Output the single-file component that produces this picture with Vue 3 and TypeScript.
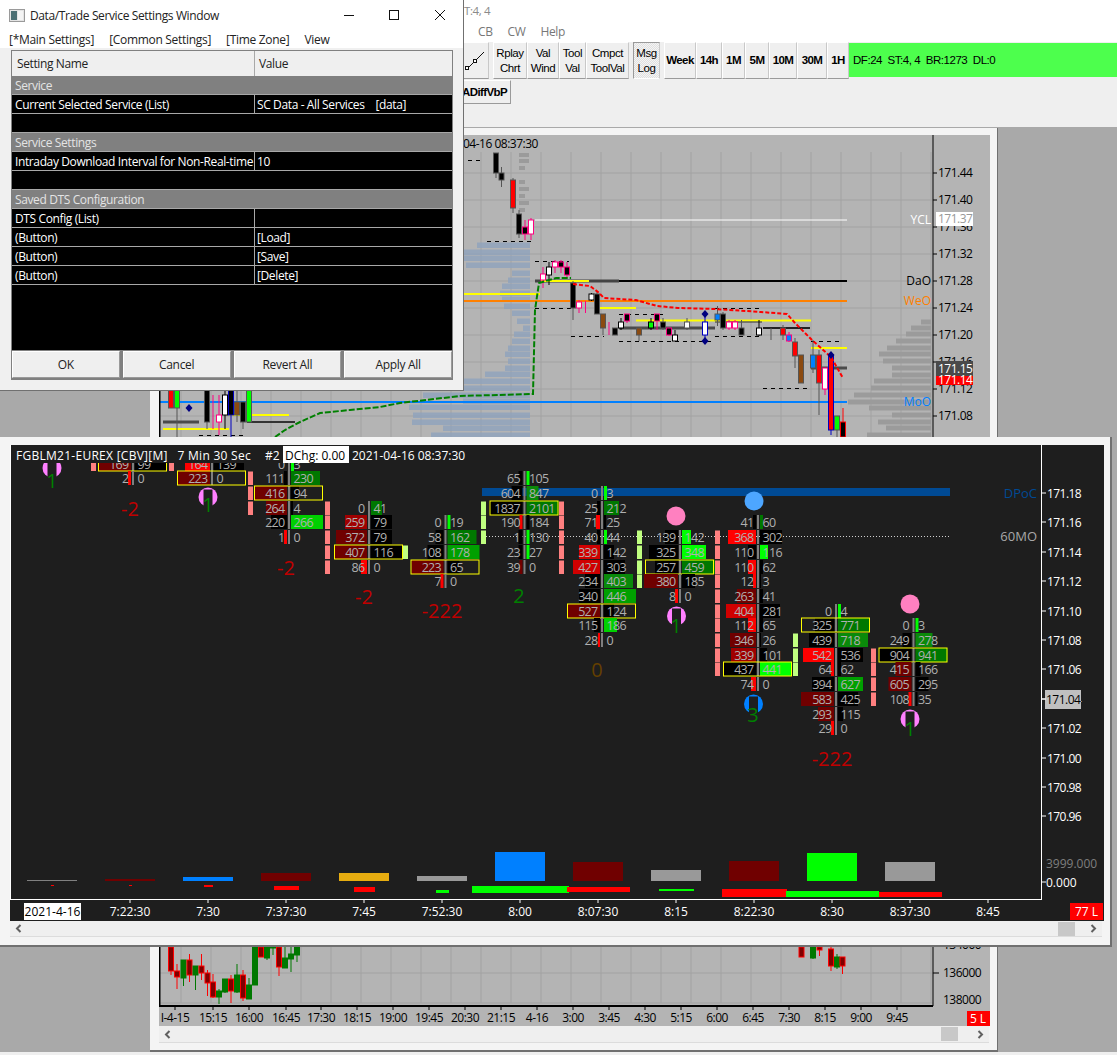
<template>
  <div class="desktop-app">
    <div class="app-title">T:4, 4</div>
    <div class="app-menu">
      <span>CB</span><span>CW</span><span>Help</span>
    </div>
    <div class="toolbar">
      <div class="tool-row">
        <button class="tbtn line-btn">
          <svg width="20" height="20" viewBox="0 0 20 20">
            <path d="M1.5 18.5 L19 1" stroke="#111" fill="none" />
            <rect x="0.5" y="15.5" width="3" height="3" fill="#fff" stroke="#111" />
            <rect x="8.5" y="8.5" width="3" height="3" fill="#fff" stroke="#111" />
          </svg>
        </button>
        <button
          v-for="b in toolButtons"
          :key="b.label"
          class="tbtn"
          :class="{ pressed: b.pressed, bold: b.bold }"
          :style="{ width: b.w + 'px', marginLeft: (b.gap || 0) + 'px' }"
        >
          <span v-for="l in b.label.split('|')" :key="l">{{ l }}</span>
        </button>
        <div class="status">DF:24&nbsp;&nbsp;ST:4, 4&nbsp;&nbsp;BR:1273&nbsp;&nbsp;DL:0</div>
      </div>
      <div class="tool-row second">
        <button class="tbtn bold study">ADiffVbP</button>
      </div>
    </div>

    <div class="workspace">
      <!-- chart behind -->
      <section class="win back-win">
        <svg class="chart" viewBox="159 135 831 891" width="831" height="891">
          <rect x="159" y="135" width="831" height="891" fill="#b4b4b4" />
          <line v-for="x in gridX" :key="'gx' + x" :x1="x" :x2="x" y1="152" y2="1003" class="grid" />
          <line v-for="y in gridY" :key="'gy' + y" x1="160" x2="933" :y1="y" :y2="y" class="grid" />
          <text x="463" y="148" class="bk">04-16 08:37:30</text>

          <rect v-for="(p, i) in leftProfile" :key="'lp' + i" :x="p[0]" :y="p[1] - 2.5" :width="530 - p[0]" height="5.5" fill="#8ea3bd" opacity="0.8" />
          <rect v-for="(p, i) in rightProfile" :key="'rp' + i" :x="p[0]" :y="p[1] - 2.5" :width="931 - p[0]" height="5" fill="#9b9b9b" />
          <rect v-for="y in [153, 159, 166, 180, 187, 194, 201, 208]" :key="'tp' + y" x="519" :y="y" :width="y % 2 ? 10 : 6" height="4" fill="#9b9b9b" />

          <line x1="535" x2="847" y1="220" y2="220" stroke="#fff" stroke-width="1" />
          <line x1="589" x2="847" y1="281" y2="281" stroke="#000" stroke-width="2" />
          <line x1="535" x2="619" y1="281" y2="281" stroke="#444" stroke-width="3" />
          <line x1="463" x2="847" y1="301" y2="301" stroke="#ff8000" stroke-width="2" />
          <line x1="160" x2="847" y1="402" y2="402" stroke="#0080ff" stroke-width="2" />
          <line v-for="(l, i) in solidLines" :key="'sl' + i" :x1="l[0]" :x2="l[1]" :y1="l[2]" :y2="l[2]" :stroke="l[3]" :stroke-width="l[4]" />
          <line v-for="(l, i) in dashLines" :key="'dl' + i" :x1="l[0]" :x2="l[1]" :y1="l[2]" :y2="l[2]" stroke="#000" stroke-dasharray="4 4" />

          <g v-for="(c, i) in candles" :key="'c' + i">
            <line :x1="c[0]" :x2="c[0]" :y1="c[3]" :y2="c[4]" :stroke="c[6]" />
            <rect :x="c[0] - 2.5" :y="c[1]" width="5" :height="c[2] - c[1]" :fill="c[5]" :stroke="c[6]" />
          </g>

          <path :d="greenLine" fill="none" stroke="#008000" stroke-width="2" stroke-dasharray="6 2" />
          <path :d="redLine" fill="none" stroke="#ff0000" stroke-width="2" stroke-dasharray="4 2" />
          <path v-for="d in diamonds" :key="d[0] + '-' + d[1]" :d="`M${d[0]} ${d[1] - 4}l3.5 4l-3.5 4l-3.5 -4z`" fill="#00007f" />

          <line x1="933" x2="933" y1="135" y2="1006" stroke="#000" />
          <line x1="159.5" x2="159.5" y1="135" y2="1006" stroke="#000" stroke-width="2" />
          <line x1="159" x2="933" y1="1006" y2="1006" stroke="#000" stroke-width="2" />
          <g v-for="p in backPrices" :key="p[0]">
            <line x1="933" x2="937" :y1="p[1]" :y2="p[1]" stroke="#000" />
            <text x="938" :y="p[1] + 4" class="bk">{{ p[0] }}</text>
          </g>
          <rect x="936" y="212" width="37" height="14" fill="#fff" />
          <text x="938" y="223" fill="#999" class="lbl tight">171.37</text>
          <rect x="936" y="361" width="37" height="15" fill="#4a4a4a" />
          <text x="938" y="373" fill="#fff" class="lbl tight">171.15</text>
          <rect x="936" y="376" width="37" height="9" fill="#ff0000" />
          <text x="938" y="384" fill="#fff" class="lbl tight">171.14</text>
          <text x="931" y="224" text-anchor="end" fill="#fff" class="lbl">YCL</text>
          <text x="931" y="285" text-anchor="end" fill="#000" class="lbl">DaO</text>
          <text x="931" y="305" text-anchor="end" fill="#ff8000" class="lbl">WeO</text>
          <text x="931" y="406" text-anchor="end" fill="#0080ff" class="lbl">MoO</text>

          <g v-for="c in lowerCandles" :key="'lc' + c[0]">
            <line :x1="c[0]" :x2="c[0]" :y1="c[3]" :y2="c[4]" :stroke="c[5] === 'r' ? '#ff0000' : '#007800'" />
            <rect :x="c[0] - 2.5" :y="c[1]" width="5" :height="c[2] - c[1]" :fill="c[5] === 'r' ? '#7f0000' : '#007800'" :stroke="c[5] === 'r' ? '#ff0000' : '#007800'" />
          </g>
          <g v-for="t in backTimes" :key="t[0]">
            <line :x1="t[1]" :x2="t[1]" y1="1006" y2="1010" stroke="#000" />
            <text :x="t[1]" y="1022" text-anchor="middle" class="bk">{{ t[0] }}</text>
          </g>
          <line x1="933" x2="939" y1="973" y2="973" stroke="#000" />
          <text x="943" y="977" class="bk">136000</text>
          <text x="943" y="949" class="bk">134000</text>
          <rect x="938" y="1005" width="40" height="6" fill="#b4b4b4" />
          <text x="943" y="1004" class="bk cut">138000</text>
          <rect x="967" y="1011" width="23" height="15" fill="#ff0000" />
          <text x="978" y="1023" text-anchor="middle" fill="#fff" class="lbl">5 L</text>
        </svg>
        <div class="hscroll">
          <svg class="chev" width="7" height="9" viewBox="0 0 7 9"><path d="M5.5 1 L2 4.5 L5.5 8" /></svg>
          <div class="thumb"></div>
          <svg class="chev" width="7" height="9" viewBox="0 0 7 9"><path d="M1.5 1 L5 4.5 L1.5 8" /></svg>
        </div>
      </section>

      <!-- footprint chart -->
      <section class="win front-win">
        <svg class="chart" viewBox="10 445 1094 476" width="1094" height="476">
          <rect x="10" y="445" width="1094" height="476" fill="#1e1e1e" />
          <rect x="482" y="488" width="468" height="8" fill="#004a94" />
          <line x1="483" x2="950" y1="536.5" y2="536.5" stroke="#d0d0d0" stroke-dasharray="1 2" />
          <text x="1037" y="498" text-anchor="end" fill="#004a94" class="mid">DPoC</text>
          <text x="1037" y="541" text-anchor="end" fill="#a8a8a8" class="mid">60MO</text>

          <g clip-path="url(#fpClip)">
            <rect v-for="(s, i) in sideBars" :key="'sb' + i" :x="s.x" :y="s.y - 6.5" width="5" height="13.5" :fill="s.c" />
            <g v-for="cell in cells" :key="cell.key">
              <rect v-if="cell.bw" :x="cell.x - 2 - cell.bw" :y="cell.y - 7" :width="cell.bw" height="14" :fill="shade[cell.bc]" />
              <rect v-if="cell.aw" :x="cell.x + 2" :y="cell.y - 7" :width="cell.aw" height="14" :fill="shade[cell.ac]" />
              <rect :x="cell.x - 1" :y="cell.y - 7" width="2" height="14" fill="#7f7f7f" />
              <rect v-if="cell.box" :x="cell.x - 34.5" :y="cell.y - 7" width="68" height="14" fill="none" stroke="#ffff00" />
              <text :x="cell.x - 4.5" :y="cell.y + 4.5" text-anchor="end" class="cell">{{ cell.bid }}</text>
              <text :x="cell.x + 4.5" :y="cell.y + 4.5" class="cell">{{ cell.ask }}</text>
            </g>
            <circle v-for="(d, i) in dots" :key="'dot' + i" :cx="d[0]" :cy="d[1]" r="9.5" :fill="d[2]" />
            <g v-for="(a, i) in arcs" :key="'arc' + i">
              <circle :cx="a[0]" :cy="a[1]" r="9.5" :fill="a[2]" />
              <rect :x="a[0] - 4.5" :y="a[1] - 7.5" width="9" height="18" fill="#1e1e1e" />
            </g>
            <text v-for="(b, i) in bigNums" :key="'bn' + i" :x="b[1]" :y="b[2]" text-anchor="middle" :fill="b[3]" class="big">{{ b[0] }}</text>
          </g>

          <rect v-for="(v, i) in volBars" :key="'v' + i" :x="v[0]" :y="v[1]" :width="v[2]" :height="v[3]" :fill="v[4]" />

          <rect x="10" y="445" width="1032" height="18" fill="#1e1e1e" />
          <text x="16" y="460" class="hdr wide">FGBLM21-EUREX [CBV][M]</text>
          <text x="177.5" y="460" class="hdr wide">7 Min 30 Sec</text>
          <text x="265" y="460" class="hdr">#2</text>
          <rect x="283" y="446" width="66" height="17" fill="#fff" />
          <text x="285" y="460" fill="#000" class="lbl">DChg: 0.00</text>
          <text x="352" y="460" class="hdr">2021-04-16 08:37:30</text>

          <line x1="10.5" x2="10.5" y1="445" y2="899" stroke="#fff" />
          <line x1="10" x2="1042" y1="899.5" y2="899.5" stroke="#fff" />
          <line x1="1041.5" x2="1041.5" y1="445" y2="900" stroke="#fff" />
          <g v-for="(p, i) in frontPrices" :key="p">
            <line x1="1042" x2="1046" :y1="priceY(i)" :y2="priceY(i)" stroke="#fff" />
            <text x="1047" :y="priceY(i) + 4.5" class="hdr price">{{ p }}</text>
          </g>
          <rect x="1045" y="690" width="36" height="19" fill="#c0c0c0" />
          <line x1="1042" x2="1046" y1="699" y2="699" stroke="#fff" />
          <text x="1046" y="704" fill="#000" class="lbl tight">171.04</text>
          <text x="1046" y="868" fill="#7f7f7f" class="lbl">3999.000</text>
          <line x1="1042" x2="1046" y1="882" y2="882" stroke="#fff" />
          <text x="1046" y="887" class="hdr">0.000</text>

          <g v-for="t in frontTimes" :key="t[0]">
            <line :x1="t[1]" :x2="t[1]" y1="900" y2="903" stroke="#fff" />
            <text :x="t[1]" y="916" text-anchor="middle" class="hdr">{{ t[0] }}</text>
          </g>
          <rect x="24" y="903" width="57" height="17" fill="#fff" />
          <text x="52.5" y="916" text-anchor="middle" fill="#000" class="lbl">2021-4-16</text>
          <rect x="1070" y="903" width="33" height="17" fill="#ff0000" />
          <text x="1086.5" y="916" text-anchor="middle" fill="#fff" class="lbl">77 L</text>

          <clipPath id="fpClip"><rect x="11" y="463" width="1030" height="436" /></clipPath>
        </svg>
        <div class="hscroll">
          <svg class="chev" width="7" height="9" viewBox="0 0 7 9"><path d="M5.5 1 L2 4.5 L5.5 8" /></svg>
          <div class="thumb"></div>
          <svg class="chev" width="7" height="9" viewBox="0 0 7 9"><path d="M1.5 1 L5 4.5 L1.5 8" /></svg>
        </div>
      </section>
    </div>
    <div class="app-foot"></div>

    <!-- settings dialog -->
    <section class="dialog">
      <header class="dlg-title">
        <svg width="16" height="13" viewBox="0 0 16 13">
          <rect x="0.5" y="0.5" width="15" height="12" fill="#e4e4e4" stroke="#9a9a9a" />
          <rect x="2" y="2" width="6" height="9" fill="#4b6f73" />
          <rect x="9" y="2" width="5" height="9" fill="#f4f4f4" />
        </svg>
        <span class="dlg-name">Data/Trade Service Settings Window</span>
        <svg class="winctl" width="102" height="12" viewBox="0 0 102 12">
          <path d="M0 6.5 H10" stroke="#111" fill="none" />
          <rect x="45.5" y="1.5" width="9" height="9" stroke="#111" fill="none" />
          <path d="M91 1 L101 11 M101 1 L91 11" stroke="#111" fill="none" />
        </svg>
      </header>
      <nav class="dlg-menu">
        <span>[*Main Settings]</span>
        <span>[Common Settings]</span>
        <span>[Time Zone]</span>
        <span>View</span>
      </nav>
      <div class="dlg-body">
        <div class="sheet">
          <div class="sheet-head">
            <div class="c-name">Setting Name</div>
            <div class="c-value">Value</div>
          </div>
          <div class="sheet-rows">
            <div v-for="(r, i) in settingRows" :key="i" class="srow" :class="r.kind">
              <template v-if="r.kind === 'group'">{{ r.name }}</template>
              <template v-else-if="r.kind === 'item'">
                <div class="c-name clip">{{ r.name }}</div>
                <div class="c-value">{{ r.value }}</div>
              </template>
            </div>
          </div>
          <div class="dlg-buttons">
            <button v-for="b in ['OK', 'Cancel', 'Revert All', 'Apply All']" :key="b">{{ b }}</button>
          </div>
        </div>
      </div>
    </section>
  </div>
</template>

<script setup lang="ts">
import { computed } from 'vue'

interface ToolBtn { label: string; w: number; gap?: number; pressed?: boolean; bold?: boolean }
interface SettingRow { kind: 'group' | 'item' | 'blank'; name?: string; value?: string }
// bid, ask, bid bar width, bid shade, ask bar width, ask shade, yellow box
type FpRow = [number, number, number, string, number, string, boolean?]
interface FpCol { x: number; start: number; rows: FpRow[] }
// x, body top, body bottom, wick top, wick bottom, fill, stroke
type Candle = [number, number, number, number, number, string, string]

const toolButtons: ToolBtn[] = [
  { label: 'Rplay|Chrt', w: 34, gap: 4 },
  { label: 'Val|Wind', w: 32 },
  { label: 'Tool|Val', w: 27 },
  { label: 'Cmpct|ToolVal', w: 43 },
  { label: 'Msg|Log', w: 27, gap: 4, pressed: true },
  { label: 'Week', w: 32, gap: 4, bold: true },
  { label: '14h', w: 26, bold: true },
  { label: '1M', w: 23, bold: true },
  { label: '5M', w: 24, bold: true },
  { label: '10M', w: 28, bold: true },
  { label: '30M', w: 30, bold: true },
  { label: '1H', w: 22, bold: true },
]

const settingRows: SettingRow[] = [
  { kind: 'group', name: 'Service' },
  { kind: 'item', name: 'Current Selected Service (List)', value: 'SC Data - All Services    [data]' },
  { kind: 'blank' },
  { kind: 'group', name: 'Service Settings' },
  { kind: 'item', name: 'Intraday Download Interval for Non-Real-time', value: '10' },
  { kind: 'blank' },
  { kind: 'group', name: 'Saved DTS Configuration' },
  { kind: 'item', name: 'DTS Config (List)', value: '' },
  { kind: 'item', name: '(Button)', value: '[Load]' },
  { kind: 'item', name: '(Button)', value: '[Save]' },
  { kind: 'item', name: '(Button)', value: '[Delete]' },
]

const gridX = Array.from({ length: 26 }, (_, i) => 181 + i * 30)
const gridY = [173, 200, 227, 254, 281, 308, 335, 362, 389, 416, 443, 973, 1003]

const backPrices: [string, number][] = [
  ['171.44', 173], ['171.40', 200], ['171.36', 227], ['171.32', 254], ['171.28', 281],
  ['171.24', 308], ['171.20', 335], ['171.16', 362], ['171.12', 389], ['171.08', 416],
]

const backTimes: [string, number][] = [
  ['I-4-15', 175], ['15:15', 213], ['16:00', 249], ['16:45', 286], ['17:30', 321], ['18:15', 357],
  ['19:00', 393], ['19:45', 429], ['20:30', 465], ['21:15', 501], ['4-16', 537], ['3:00', 573],
  ['3:45', 609], ['4:30', 645], ['5:15', 681], ['6:00', 717], ['6:45', 753], ['7:30', 789],
  ['8:15', 825], ['9:00', 861], ['9:45', 897],
]

const leftProfile: [number, number][] = [
  [477, 245], [464, 252], [464, 258], [466, 265], [512, 273], [508, 280], [502, 286], [500, 293],
  [502, 299], [504, 306], [512, 313], [517, 321], [523, 328], [514, 334], [512, 341], [508, 348],
  [505, 354], [508, 361], [505, 368], [485, 374], [463, 381], [463, 388], [423, 395], [463, 401],
  [409, 407], [413, 415], [412, 422], [443, 428], [431, 435],
]

const rightProfile: [number, number][] = [
  [921, 322], [911, 328], [906, 334], [896, 341], [887, 348], [879, 354], [883, 361], [892, 368],
  [892, 375], [874, 381], [871, 388], [854, 395], [848, 402], [869, 408], [892, 415], [878, 422],
  [886, 428], [867, 435],
]

const solidLines: [number, number, number, string, number][] = [
  [463, 540, 294, '#ffff00', 2], [541, 589, 281, '#ffff00', 2], [595, 636, 308, '#ffff00', 2],
  [636, 811, 320.5, '#ffff00', 2], [811, 847, 348, '#ffff00', 2], [619, 715, 328, '#4a4a4a', 3],
  [715, 762, 322, '#333', 1], [763, 810, 328, '#222', 2], [811, 847, 368, '#4a4a4a', 3],
  [163, 199, 422, '#4a4a4a', 3], [163, 229, 429, '#ffff00', 2], [229, 289, 415, '#ffff00', 2],
  [247, 295, 422, '#333', 2],
]

const dashLines: [number, number, number][] = [
  [487, 531, 241.5], [535, 569, 261.5], [535, 573, 308.5], [571, 604, 336.5], [619, 664, 314.5],
  [619, 711, 341.5], [715, 761, 336.5], [715, 761, 308.5], [763, 808, 388.5], [811, 843, 341.5],
  [199, 244, 435.5], [460, 480, 160.5],
]

const BL = '#000'
const GR = '#555'
const PK = '#ff0080'
const candles: Candle[] = [
  [496, 153, 173, 153, 178, BL, GR], [501.5, 173, 180, 167, 187, BL, GR], [513, 180, 208, 178, 213, '#ff0000', GR],
  [519, 214, 234, 210, 238, BL, GR], [525, 227, 234, 220, 240, BL, PK], [531, 220, 234, 218, 240, '#fff', PK],
  [543, 274, 280, 267, 288, '#fff', PK], [549, 267, 275, 262, 285, '#fff', BL], [555, 262, 267, 260, 273, '#fff', PK],
  [561, 262, 267, 260, 273, BL, PK], [567, 267, 275, 262, 278, BL, PK], [573, 283, 308, 281, 320, BL, GR],
  [579, 302, 308, 300, 313, '#fff', PK], [585.5, 301, 301, 301, 313, PK, PK], [591.5, 294, 300, 293, 301, '#fff', BL],
  [597, 294, 314, 292, 314, BL, GR], [603, 314, 328, 314, 335, '#8b4a10', GR], [609, 322, 322, 322, 335, PK, PK],
  [615, 328, 335, 328, 335, BL, GR], [621, 322, 328, 318, 330, '#fff', BL], [627, 314, 321, 314, 323, BL, PK],
  [639, 328, 335, 328, 341, '#8b4a10', GR], [651, 322, 328, 318, 330, '#00ff00', BL], [657, 314, 321, 314, 330, BL, PK],
  [663, 322, 328, 318, 330, BL, GR], [669, 328, 335, 328, 336, BL, PK], [675, 335, 341, 330, 341, '#fff', BL],
  [687, 322, 328, 318, 330, '#fff', GR], [705, 322, 335, 316, 340, '#fff', '#0000c0'], [717.5, 314, 320, 306, 326, '#0080ff', GR],
  [723, 314, 328, 312, 330, BL, GR], [729, 322, 328, 320, 330, '#fff', PK], [735, 322, 328, 320, 330, '#fff', PK],
  [741.5, 328, 335, 320, 335, BL, GR], [759, 328, 335, 320, 336, '#fff', BL], [771, 328, 328, 328, 340, GR, GR],
  [783, 328, 335, 325, 340, '#ff0000', GR], [789, 335, 341, 332, 342, '#0080ff', PK], [795, 342, 356, 338, 368, '#ff0000', GR],
  [801, 355, 383, 355, 383, '#8b4a10', GR], [813, 355, 368, 340, 373, '#0080ff', GR], [819, 355, 383, 350, 415, '#ff0000', GR],
  [825, 368, 389, 368, 395, '#fff', PK], [831, 355, 430, 352, 435, '#ff0000', '#0000c0'], [837, 416, 430, 416, 437, '#00ff00', GR],
  [843, 422, 437, 408, 437, BL, '#ff0000'],
  [171, 390, 408, 385, 408, '#ff0000', GR], [177, 390, 408, 385, 437, '#00ff00', GR], [207, 390, 422, 385, 429, BL, GR],
  [213, 422, 422, 395, 429, PK, PK], [219, 415, 422, 395, 435, '#fff', PK], [225, 395, 415, 385, 429, '#fff', BL],
  [231, 385, 415, 385, 437, BL, '#0000c0'], [237, 402, 415, 390, 422, '#8b4a10', GR], [243, 402, 422, 402, 429, BL, GR],
  [249, 390, 422, 385, 422, '#00ff00', GR],
]

const diamonds: [number, number][] = [[705, 314], [705, 341], [831, 355], [189, 408]]

const greenLine = 'M275 437 L285 430 L300 422 L320 413 L350 410 L380 407 L400 403 L460 396 L533 394 L535 310 L539 283 L556 278 L571 278'
const redLine = 'M573 284 L590 286 L598 292 L604 298 L636 300 L657 306 L678 308 L715 309 L761 312 L787 314 L795 323 L812 340 L831 357 L843 378'

const lowerCandles: [number, number, number, number, number, string][] = [
  [171, 947, 971, 947, 975, 'r'], [177, 971, 977, 964, 989, 'r'], [183.5, 960, 978, 960, 986, 'g'],
  [189.5, 960, 975, 954, 982, 'r'], [195.5, 966, 975, 966, 990, 'g'], [201.5, 966, 973, 954, 980, 'r'],
  [207.5, 973, 983, 970, 996, 'r'], [213, 982, 997, 974, 998, 'r'], [219, 991, 997, 989, 1004, 'g'],
  [225, 979, 992, 979, 993, 'g'], [231, 979, 991, 975, 1003, 'r'], [237, 975, 992, 964, 993, 'g'],
  [243, 975, 998, 970, 1001, 'r'], [249, 985, 999, 978, 999, 'g'], [255, 947, 985, 947, 985, 'g'],
  [261, 947, 957, 947, 957, 'r'], [267, 947, 958, 947, 960, 'g'], [273, 947, 948, 947, 955, 'g'],
  [279, 947, 967, 947, 976, 'r'], [285, 958, 968, 947, 968, 'g'], [291, 954, 959, 947, 972, 'g'],
  [297, 947, 955, 947, 962, 'g'], [801.5, 947, 957, 947, 957, 'r'], [813, 947, 958, 947, 959, 'g'],
  [819.5, 947, 950, 947, 956, 'r'], [831, 949, 966, 947, 971, 'r'], [837, 957, 967, 954, 969, 'g'],
  [842.5, 957, 966, 957, 974, 'r'],
]

const frontPrices = ['171.18', '171.16', '171.14', '171.12', '171.10', '171.08', '171.06', '171.04', '171.02', '171.00', '170.98', '170.96']
const priceY = (i: number) => Math.round(493 + i * 29.4)

const frontTimes: [string, number][] = [
  ['7:22:30', 130], ['7:30', 208], ['7:37:30', 286], ['7:45', 364], ['7:52:30', 442], ['8:00', 520],
  ['8:07:30', 598], ['8:15', 676], ['8:22:30', 754], ['8:30', 832], ['8:37:30', 910], ['8:45', 988],
]

const shade: Record<string, string> = {
  k: '#000000', r: '#ff0000', d: '#d00000', m: '#a00000', v: '#700000',
  g: '#00ff00', h: '#00d000', a: '#00a000', t: '#0a8a0a', n: '#007800',
}

const fp: FpCol[] = [
  { x: 133, start: -2, rows: [[169, 99, 32, 'v', 32, 'k', true], [2, 0, 3, 'r', 0, 'k']] },
  { x: 212, start: -2, rows: [[164, 139, 25, 'r', 30, 'k'], [223, 0, 32, 'v', 0, 'k', true]] },
  { x: 289, start: -2, rows: [[0, 3, 0, 'k', 3, 'g'], [111, 230, 3, 'k', 29, 'n'], [416, 94, 33, 'v', 8, 'k', true], [264, 4, 21, 'v', 2, 'k'], [220, 266, 16, 'k', 32, 'h'], [1, 0, 3, 'r', 0, 'k']] },
  { x: 369, start: 1, rows: [[0, 41, 0, 'k', 11, 'n'], [259, 79, 22, 'm', 21, 'k'], [372, 79, 31, 'v', 21, 'k'], [407, 116, 32, 'v', 32, 'k', true], [86, 0, 6, 'r', 0, 'k']] },
  { x: 445.5, start: 2, rows: [[0, 19, 0, 'k', 3, 'g'], [58, 162, 8, 'k', 29, 'n'], [108, 178, 16, 'k', 32, 'a'], [223, 65, 32, 'v', 12, 'k', true], [7, 0, 3, 'r', 0, 'k']] },
  { x: 524.5, start: -1, rows: [[65, 105, 4, 'k', 3, 'g'], [604, 847, 11, 'k', 12, 't'], [1837, 2101, 33, 'k', 32, 'n', true], [190, 184, 3, 'r', 3, 'k'], [1, 130, 4, 'k', 3, 'g'], [23, 27, 4, 'k', 3, 'g'], [39, 0, 3, 'v', 0, 'k']] },
  { x: 602, start: 0, rows: [[0, 3, 0, 'k', 3, 'g'], [25, 212, 3, 'k', 15, 'n'], [71, 25, 4, 'r', 2, 'k'], [40, 44, 3, 'k', 3, 'g'], [339, 142, 21, 'd', 10, 'k'], [427, 303, 27, 'd', 21, 'k'], [234, 403, 15, 'k', 29, 't'], [340, 446, 21, 'k', 32, 'a'], [527, 124, 32, 'v', 10, 'k', true], [115, 186, 6, 'k', 13, 'h'], [28, 0, 2, 'r', 0, 'k']] },
  { x: 680, start: 3, rows: [[139, 142, 13, 'k', 9, 'g'], [325, 348, 29, 'k', 24, 'g'], [257, 459, 23, 'k', 33, 'n', true], [380, 185, 34, 'v', 13, 'k'], [8, 0, 3, 'r', 0, 'k']] },
  { x: 758, start: 2, rows: [[41, 60, 3, 'k', 3, 'n'], [368, 302, 28, 'r', 22, 'k'], [110, 116, 8, 'k', 8, 'g'], [110, 62, 8, 'r', 3, 'k'], [12, 3, 3, 'r', 1, 'k'], [263, 41, 19, 'v', 3, 'k'], [404, 281, 30, 'd', 20, 'k'], [112, 65, 8, 'r', 3, 'k'], [346, 26, 26, 'v', 1, 'k'], [339, 101, 25, 'm', 7, 'k'], [437, 441, 32, 'k', 32, 'g', true], [74, 0, 5, 'r', 0, 'k']] },
  { x: 836, start: 8, rows: [[0, 4, 0, 'k', 3, 'g'], [325, 771, 19, 'k', 32, 'n', true], [439, 718, 25, 'k', 30, 't'], [542, 536, 31, 'r', 25, 'k'], [64, 62, 3, 'r', 3, 'k'], [394, 627, 22, 'k', 25, 'a'], [583, 425, 33, 'v', 20, 'k'], [293, 115, 16, 'v', 5, 'k'], [29, 0, 3, 'r', 0, 'k']] },
  { x: 913.5, start: 9, rows: [[0, 3, 0, 'k', 3, 'g'], [249, 278, 9, 'k', 17, 't'], [904, 941, 32, 'k', 32, 'n', true], [415, 166, 16, 'v', 5, 'k'], [605, 295, 23, 'v', 13, 'k'], [108, 35, 3, 'r', 2, 'k']] },
]

const rowY = (i: number) => Math.round(493 + i * 14.7)

const cells = computed(() =>
  fp.flatMap((col) =>
    col.rows.map((r, i) => ({
      key: col.x + '-' + i,
      x: col.x,
      y: rowY(col.start + i),
      bid: r[0],
      ask: r[1],
      bw: r[2],
      bc: r[3],
      aw: r[4],
      ac: r[5],
      box: r[6],
    })),
  ),
)

const side = (x: number, c: string, rows: number[]) => rows.map((r) => ({ x, c, y: rowY(r) }))
const PINK = '#ff8080'
const LIME = '#c0ff80'
const sideBars = [
  ...side(91, PINK, [-2]), ...side(169, PINK, [-2]),
  ...side(248, PINK, [-1, 0, 1]),
  ...side(325, PINK, [1, 2, 3, 4, 5]),
  ...side(403, LIME, [4]),
  ...side(481, LIME, [1, 2, 3]),
  ...side(559, PINK, [1, 2, 3, 4, 5]),
  ...side(637, LIME, [3, 4, 5, 6]),
  ...side(715, PINK, [3, 4, 5, 6, 7, 8, 9, 10, 11, 12]),
  ...side(793, LIME, [10, 11, 12]),
  ...side(871, PINK, [11, 12, 13, 14]),
]

const dots: [number, number, string][] = [[676, 516, '#ff80c0'], [754, 501, '#4da6ff'], [910, 604, '#ff80c0']]
const arcs: [number, number, string][] = [[52, 468, '#ff80ff'], [208, 497, '#ff80ff'], [676.5, 616, '#ff80ff'], [753.5, 704, '#0080ff'], [910, 719, '#ff80ff']]

const bigNums: [string, number, number, string][] = [
  ['1', 52, 488, '#008000'], ['-2', 130, 516, '#c00000'], ['1', 208, 512, '#008000'], ['-2', 286, 575, '#c00000'],
  ['-2', 364, 604, '#c00000'], ['-222', 442, 618, '#c00000'], ['2', 519, 603, '#008000'], ['0', 597, 677, '#644000'],
  ['1', 676, 633, '#008000'], ['3', 753, 722, '#008000'], ['-222', 832, 766, '#c00000'], ['1', 910, 736, '#008000'],
]

const volBars: [number, number, number, number, string][] = [
  [27, 880, 50, 1, '#808080'], [105, 879, 50, 2, '#700000'], [183, 877, 50, 4, '#0080ff'], [261, 873, 50, 8, '#700000'],
  [339, 873, 50, 8, '#e6ac10'], [417, 876, 50, 5, '#999'], [495, 852, 50, 29, '#0080ff'], [573, 862, 50, 19, '#700000'],
  [651, 870, 50, 11, '#999'], [729, 861, 50, 20, '#700000'], [807, 853, 50, 28, '#00ff00'], [885, 862, 50, 19, '#999'],
  [51, 885, 3, 1, '#ff0000'], [129, 885, 3, 1, '#ff0000'], [204, 885, 9, 2, '#ff0000'], [274, 886, 25, 4, '#ff0000'],
  [354, 887, 21, 5, '#ff0000'], [436, 890, 13, 3, '#00ff00'], [472, 886, 97, 7, '#00ff00'], [567, 887, 63, 5, '#ff0000'],
  [659, 889, 35, 2, '#00ff00'], [722, 889, 65, 8, '#ff0000'], [786, 891, 93, 6, '#00ff00'], [879, 892, 63, 5, '#ff0000'],
]
</script>

<style scoped>
.desktop-app {
  position: relative;
  width: 1117px;
  height: 1055px;
  overflow: hidden;
  display: flex;
  flex-direction: column;
  font-family: "Open Sans", "Noto Sans", sans-serif;
  font-size: 12px;
  letter-spacing: -0.38px;
  background: #efefef;
}

.app-title {
  height: 24px;
  box-sizing: border-box;
  padding: 4px 0 0 464px;
  background: #fff;
  color: #8a8a8a;
  font-size: 11.5px;
  line-height: 14px;
}

.app-menu {
  height: 18px;
  display: flex;
  gap: 15px;
  padding-left: 478px;
  background: #fff;
  color: #777;
  line-height: 16px;
}

.toolbar {
  height: 85px;
  display: flex;
  flex-direction: column;
  background: #efefef;
}

.tool-row {
  height: 37px;
  display: flex;
  padding-left: 460px;
}

.tool-row.second {
  height: 24px;
  margin-top: 1px;
}

.tbtn {
  display: flex;
  flex-direction: column;
  align-items: center;
  justify-content: center;
  box-sizing: border-box;
  padding: 0;
  background: #efefef;
  border: none;
  border-top: 1px solid #fff;
  border-right: 1px solid #c8c8c8;
  border-bottom: 1px solid #9a9a9a;
  border-left: 1px solid #fff;
  font-family: "Liberation Sans", sans-serif;
  font-size: 11.5px;
  letter-spacing: -0.4px;
  line-height: 15px;
  color: #000;
}

.tbtn.bold {
  font-weight: 700;
  letter-spacing: -0.6px;
}

.tbtn.pressed {
  background: repeating-conic-gradient(#f4f4f4 0 25%, #e0e0e0 0 50%) 0 0 / 2px 2px;
  border-top-color: #9a9a9a;
  border-left-color: #9a9a9a;
  border-bottom-color: #fff;
}

.line-btn {
  width: 29px;
}

.study {
  width: 51px;
  align-items: flex-end;
  padding-right: 3px;
  border-right-color: #9a9a9a;
}

.status {
  flex: 1;
  height: 34px;
  margin-top: 1px;
  padding-left: 4px;
  background: #4dff4d;
  font-family: "Liberation Sans", sans-serif;
  font-size: 11.5px;
  letter-spacing: -0.45px;
  line-height: 35px;
  color: #000;
}

.workspace {
  position: relative;
  flex: 1;
  background: #a9a9a9;
}

.app-foot {
  height: 3px;
  background: #efefef;
}

.win {
  position: absolute;
  display: flex;
  flex-direction: column;
  box-sizing: border-box;
  background: #f4f4f4;
}

.back-win {
  left: 150px;
  top: 1px;
  width: 848px;
  height: 924px;
  padding: 7px 8px 7px 9px;
  border-right: 1px solid #707070;
  border-bottom: 2px solid #707070;
}

.front-win {
  left: 0;
  top: 310px;
  width: 1112px;
  height: 510px;
  padding: 8px 8px 8px 10px;
  border-right: 2px solid #707070;
  border-bottom: 2px solid #707070;
}

.chart {
  display: block;
  flex: none;
}

.hscroll {
  height: 17px;
  display: flex;
  align-items: center;
  padding: 0 5px;
  background: #efefef;
  border-bottom: 1px solid #dcdcdc;
  box-sizing: border-box;
}

.thumb {
  width: 17px;
  height: 14px;
  margin-left: auto;
  margin-right: 15px;
  background: #c8c8c8;
}

.back-win .thumb {
  margin-right: 19px;
}

.chev path {
  fill: none;
  stroke: #606060;
  stroke-width: 2;
}

.grid {
  stroke: #a2a2a2;
  stroke-width: 1;
}

.bk {
  font-size: 12px;
  letter-spacing: -0.5px;
  fill: #000;
}

.lbl {
  font-size: 12px;
  letter-spacing: 0;
}

.lbl.tight {
  letter-spacing: -0.5px;
}

.mid {
  font-size: 13px;
  letter-spacing: 0;
}

.hdr {
  font-size: 12px;
  letter-spacing: 0;
  fill: #fff;
}

.hdr.wide {
  letter-spacing: 0.27px;
}

.hdr.price {
  font-weight: 500;
  letter-spacing: -0.55px;
}

.cell {
  font-size: 12.5px;
  letter-spacing: -0.7px;
  fill: #b0b0b0;
}

.big {
  font-size: 20px;
  letter-spacing: 0;
}

.dialog {
  position: absolute;
  left: 0;
  top: 0;
  width: 464px;
  height: 391px;
  box-sizing: border-box;
  display: flex;
  flex-direction: column;
  background: #fff;
  border-right: 1px solid #707070;
  border-bottom: 1px solid #707070;
}

.dlg-title {
  height: 30px;
  display: flex;
  align-items: center;
  padding-left: 9px;
}

.dlg-name {
  margin-left: 5px;
  color: #222;
}

.winctl {
  margin-left: auto;
  margin-right: 17px;
}

.dlg-menu {
  height: 18px;
  display: flex;
  gap: 15px;
  padding-left: 9px;
  letter-spacing: -0.3px;
  line-height: 20px;
  color: #222;
}

.dlg-body {
  flex: 1;
  padding: 2px 10px 10px 11px;
  background: #f0f0f0;
}

.sheet {
  height: 100%;
  box-sizing: border-box;
  display: flex;
  flex-direction: column;
  border: 1px solid #808080;
  background: #000;
}

.sheet-head {
  height: 25px;
  flex: none;
  display: flex;
  background: #efefef;
  color: #222;
  line-height: 25px;
}

.sheet-head .c-name {
  padding-left: 5px;
}

.sheet-head .c-value {
  padding-left: 4px;
}

.c-name {
  width: 243px;
  flex: none;
  box-sizing: border-box;
  border-right: 1px solid #a8a8a8;
  padding-left: 3px;
}

.clip {
  overflow: hidden;
  white-space: nowrap;
}

.c-value {
  padding-left: 2px;
  white-space: pre;
}

.sheet-rows {
  flex: 1;
}

.srow {
  height: 19px;
  box-sizing: border-box;
  display: flex;
  color: #fff;
  line-height: 19px;
  border-bottom: 1px solid #a8a8a8;
}

.srow.group {
  background: #808080;
  color: #e4e4e4;
  padding-left: 3px;
}

.dlg-buttons {
  flex: none;
  display: flex;
  gap: 3px;
  height: 29px;
  padding: 1px 0;
  box-sizing: border-box;
  background: #808080;
}

.dlg-buttons button {
  flex: 1;
  padding: 0;
  font-family: inherit;
  font-size: 12px;
  letter-spacing: -0.3px;
  color: #222;
  background: #efefef;
  border: 1px solid #fff;
  border-right-color: #9a9a9a;
  border-bottom-color: #9a9a9a;
}
</style>

<style>
html,
body {
  margin: 0;
  background: #a9a9a9;
}
</style>
